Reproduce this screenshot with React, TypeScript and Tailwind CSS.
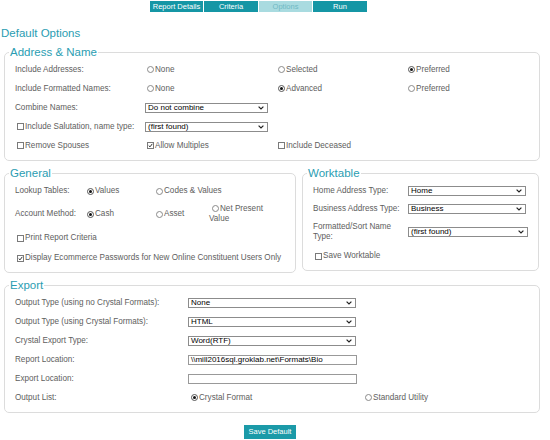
import React from 'react';

const headingColor = 'text-[#2a9db2]';

function Radio({ checked = false }: { checked?: boolean }) {
  return (
    <span
      className={`flex h-[7px] w-[7px] shrink-0 items-center justify-center rounded-full border bg-white ${
        checked ? 'border-[#555]' : 'border-[#8a8a8a]'
      }`}
    >
      {checked && <span className="h-[3px] w-[3px] rounded-full bg-[#111]" />}
    </span>
  );
}

function Check({ checked = false }: { checked?: boolean }) {
  return (
    <span className="flex h-[7px] w-[7px] shrink-0 items-center justify-center border border-[#7a7a7a] bg-white">
      {checked && (
        <svg viewBox="0 0 7 7" className="h-[7px] w-[7px]">
          <path d="M1 3.6 L2.8 5.4 L6 1.2" fill="none" stroke="#222" strokeWidth={1.3} />
        </svg>
      )}
    </span>
  );
}

function Choice({
  kind = 'radio',
  checked = false,
  label,
  indent = 'ml-[2px]',
}: {
  kind?: 'radio' | 'check';
  checked?: boolean;
  label: string;
  indent?: string;
}) {
  return (
    <span className={`flex items-center gap-px ${indent}`}>
      {kind === 'radio' ? <Radio checked={checked} /> : <Check checked={checked} />}
      <span className="whitespace-nowrap">{label}</span>
    </span>
  );
}

function Select({ value, width }: { value: string; width: string }) {
  return (
    <div
      className={`flex h-[10px] items-center justify-between border border-[#8c8c8c] bg-white pl-[2px] pr-[3px] text-[8px] leading-none text-black ${width}`}
    >
      <span className="whitespace-nowrap">{value}</span>
      <svg viewBox="0 0 6 4" className="h-[4px] w-[6px]">
        <path d="M0.6 0.6 L3 3 L5.4 0.6" fill="none" stroke="#222" strokeWidth={1.2} />
      </svg>
    </div>
  );
}

function TextBox({ value = '' }: { value?: string }) {
  return (
    <div className="flex h-[10px] w-[169px] items-center overflow-hidden border border-[#999] bg-white pl-[2px] text-[8px] leading-none text-black">
      <span className="whitespace-nowrap">{value}</span>
    </div>
  );
}

function Group({
  legend,
  className,
  children,
}: {
  legend: string;
  className: string;
  children: React.ReactNode;
}) {
  return (
    <fieldset className={`rounded-[5px] border border-[#dcdcdc] ${className}`}>
      <legend className={`ml-[4px] px-px text-[11.5px] leading-[13px] ${headingColor}`}>{legend}</legend>
      {children}
    </fieldset>
  );
}

const tabs = [
  { name: 'Report Details', w: 'w-[53px]', active: false },
  { name: 'Criteria', w: 'w-[55px]', active: false },
  { name: 'Options', w: 'w-[54px]', active: true },
  { name: 'Run', w: 'w-[55px]', active: false },
];

export default function App() {
  return (
    <div className="h-[440px] w-[550px] overflow-hidden bg-white font-['Liberation_Sans',Arial,sans-serif] text-[8.15px] leading-[10px] text-[#5e5e5e]">
      {/* tabs */}
      <div className="ml-[150px] mt-px flex h-[11px]">
        {tabs.map((t, i) => (
          <div
            key={t.name}
            className={`${t.w} text-center text-[7.5px] leading-[11px] ${i > 0 ? 'border-l border-white' : ''} ${
              t.active ? 'bg-[#a9dbe0] text-[#6fb9c3]' : 'bg-[#1596a5] text-white'
            }`}
          >
            {t.name}
          </div>
        ))}
      </div>

      <div className={`ml-px mt-[15px] text-[11.5px] leading-[13px] ${headingColor}`}>Default Options</div>

      {/* Address & Name */}
      <Group legend="Address & Name" className="ml-[4px] mt-[6px] w-[536px]">
        <div className="px-[10px] pb-[5px] pt-px">
          <div className="flex h-[19px] items-center">
            <div className="w-[130px]">Include Addresses:</div>
            <div className="w-[131px]"><Choice label="None" /></div>
            <div className="w-[130px]"><Choice label="Selected" /></div>
            <div><Choice label="Preferred" checked /></div>
          </div>
          <div className="flex h-[19px] items-center">
            <div className="w-[130px]">Include Formatted Names:</div>
            <div className="w-[131px]"><Choice label="None" /></div>
            <div className="w-[130px]"><Choice label="Advanced" checked /></div>
            <div><Choice label="Preferred" /></div>
          </div>
          <div className="flex h-[19px] items-center">
            <div className="w-[130px]">Combine Names:</div>
            <Select value="Do not combine" width="w-[123px]" />
          </div>
          <div className="flex h-[19px] items-center">
            <div className="w-[130px]"><Choice kind="check" label="Include Salutation, name type:" /></div>
            <Select value="(first found)" width="w-[123px]" />
          </div>
          <div className="flex h-[19px] items-center">
            <div className="w-[130px]"><Choice kind="check" label="Remove Spouses" /></div>
            <div className="w-[131px]"><Choice kind="check" label="Allow Multiples" checked /></div>
            <div><Choice kind="check" label="Include Deceased" /></div>
          </div>
        </div>
      </Group>

      <div className="mt-[6px] flex items-start">
        {/* General */}
        <Group legend="General" className="ml-[4px] w-[292px]">
          <div className="px-[10px] pb-[5px] pt-px">
            <div className="flex h-[20px] items-center">
              <div className="w-[70px]">Lookup Tables:</div>
              <div className="w-[69px]"><Choice label="Values" checked /></div>
              <div><Choice label="Codes & Values" /></div>
            </div>
            <div className="flex h-[26px] items-center">
              <div className="w-[70px]">Account Method:</div>
              <div className="w-[69px]"><Choice label="Cash" checked /></div>
              <div className="w-[55px]"><Choice label="Asset" /></div>
              <div className="leading-[10.5px]">
                <Choice label="Net Present" indent="ml-[3px]" />
                <div>Value</div>
              </div>
            </div>
            <div className="flex h-[22px] items-center">
              <Choice kind="check" label="Print Report Criteria" />
            </div>
            <div className="flex h-[18px] items-center">
              <Choice kind="check" label="Display Ecommerce Passwords for New Online Constituent Users Only" checked />
            </div>
          </div>
        </Group>

        {/* Worktable */}
        <Group legend="Worktable" className="ml-[6px] w-[237px]">
          <div className="px-[10px] pb-[4px] pt-px">
            <div className="flex h-[19px] items-center">
              <div className="w-[95px]">Home Address Type:</div>
              <Select value="Home" width="w-[118px]" />
            </div>
            <div className="flex h-[18px] items-center">
              <div className="w-[95px]">Business Address Type:</div>
              <Select value="Business" width="w-[118px]" />
            </div>
            <div className="flex h-[28px] items-center">
              <div className="w-[95px] leading-[10.5px]">
                Formatted/Sort Name
                <br />
                Type:
              </div>
              <Select value="(first found)" width="w-[120px]" />
            </div>
            <div className="flex h-[20px] items-center">
              <Choice kind="check" label="Save Worktable" />
            </div>
          </div>
        </Group>
      </div>

      {/* Export */}
      <Group legend="Export" className="ml-[4px] mt-[6px] w-[536px]">
        <div className="px-[10px] pb-[5px] pt-px">
          <div className="flex h-[19px] items-center">
            <div className="w-[173px]">Output Type (using no Crystal Formats):</div>
            <Select value="None" width="w-[168px]" />
          </div>
          <div className="flex h-[19px] items-center">
            <div className="w-[173px]">Output Type (using Crystal Formats):</div>
            <Select value="HTML" width="w-[168px]" />
          </div>
          <div className="flex h-[19px] items-center">
            <div className="w-[173px]">Crystal Export Type:</div>
            <Select value="Word(RTF)" width="w-[168px]" />
          </div>
          <div className="flex h-[19px] items-center">
            <div className="w-[173px]">Report Location:</div>
            <TextBox value="\\mill2016sql.groklab.net\Formats\Bio" />
          </div>
          <div className="flex h-[19px] items-center">
            <div className="w-[173px]">Export Location:</div>
            <TextBox />
          </div>
          <div className="flex h-[19px] items-center">
            <div className="w-[173px]">Output List:</div>
            <div className="w-[174px]"><Choice label="Crystal Format" checked indent="ml-[3px]" /></div>
            <div><Choice label="Standard Utility" indent="ml-[3px]" /></div>
          </div>
        </div>
      </Group>

      <div className="ml-[244px] mt-[12px] flex h-[14px] w-[52px] items-center justify-center bg-[#1b9aa8] text-[7.5px] text-white">
        Save Default
      </div>
    </div>
  );
}
